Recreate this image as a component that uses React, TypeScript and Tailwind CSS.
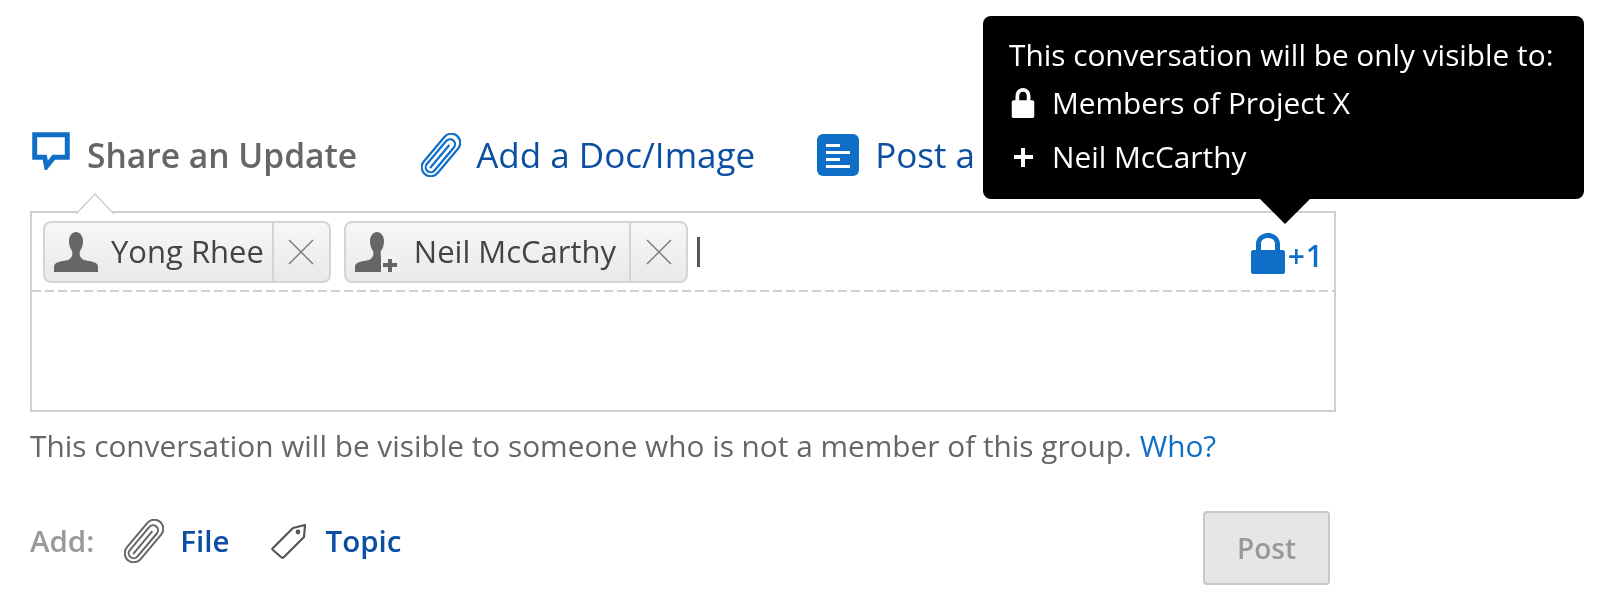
const font = "font-['Open_Sans',sans-serif]";

const PersonIcon = ({ plus }: { plus?: boolean }) => (
  <svg width="46" height="40" viewBox="0 0 46 40" fill="#666">
    <path d="M23 0c-4 0-7 4-7 9 0 4 1 7 3 10 1 4 0 7-4 9-3 1-13 1-14 6v6h44v-6c-1-5-11-5-14-6-4-2-5-5-4-9 2-3 3-6 3-10 0-5-3-9-7-9z" />
    {plus && (
      <>
        <rect x="27" y="23" width="19" height="17" fill="#f1f1f1" />
        <path d="M34 27h4v4h5v4h-5v5h-4v-5h-5v-4h5z" />
      </>
    )}
  </svg>
);

// nested loops of a paper clip, turned on the diagonal
const ClipIcon = ({ color, w, h, sw }: { color: string; w: number; h: number; sw: number }) => (
  <svg width={w} height={h} viewBox="0 0 40 44" fill="none" stroke={color} strokeWidth={sw}>
    <g transform="rotate(40 20 22)">
      <rect x="11" y="-3" width="18" height="50" rx="9" />
      <rect x="15" y="3" width="10" height="40" rx="5" />
      <path d="M20 9v30" />
    </g>
  </svg>
);

const Chip = ({ name, plus, gap, pr }: { name: string; plus?: boolean; gap: string; pr: string }) => (
  <div className="flex h-[62px] items-stretch rounded-lg border-2 border-[#d4d4d4] bg-gradient-to-b from-[#f7f7f7] to-[#e9e9e9]">
    <div className={`flex items-center pl-2 ${pr} ${gap}`}>
      <PersonIcon plus={plus} />
      <span className="text-[31px] text-[#444]">{name}</span>
    </div>
    <div className="flex w-[57px] items-center justify-center border-l-2 border-[#d4d4d4]">
      <svg width="28" height="28" viewBox="0 0 28 28" stroke="#777" strokeWidth="1.4">
        <path d="M2 2l24 24M26 2L2 26" />
      </svg>
    </div>
  </div>
);

export default function App() {
  return (
    <div className={`relative h-[604px] w-[1600px] overflow-hidden bg-white blur-[0.5px] ${font}`}>
      <div className="flex flex-col pl-[30px] pt-[130px]">
        {/* tabs */}
        <div className="flex h-[50px] items-center">
          <svg width="42" height="38" viewBox="0 0 42 42" fill="none" className="mr-[15px] -mt-[8px]">
            <path d="M3 3h36v25H24l-8 10-2-10H3z" stroke="#0f6fc6" strokeWidth="5.5" />
          </svg>
          <span className="text-[33.6px] font-semibold text-[#666]">Share an Update</span>
          <span className="ml-[64px] mr-[15px]">
            <ClipIcon color="#0f6fc6" w={40} h={44} sw={2.2} />
          </span>
          <span className="text-[35px] text-[#0b4ea2]">Add a Doc/Image</span>
          <svg width="42" height="42" viewBox="0 0 42 42" className="ml-[62px] mr-[16px]">
            <rect width="42" height="42" rx="6" fill="#0f6fc6" />
            <path d="M9 10h14v3H9zM9 17h24v3H9zM9 24h14v3H9zM9 31h24v3H9z" fill="#fff" />
          </svg>
          <span className="text-[35px] text-[#0b4ea2]">Post a</span>
        </div>

        {/* composer */}
        <div className="relative mt-[31px] flex h-[201px] w-[1306px] flex-col border-2 border-[#cfcfcf]">
          <svg width="38" height="21" viewBox="0 0 38 21" className="absolute left-[44px] top-[-20px]">
            <path d="M0 21L19 1l19 20" fill="#fff" stroke="#cfcfcf" strokeWidth="1.5" />
          </svg>
          <div className="flex h-[77px] items-center pl-[11px] pr-[10px]">
            <div className="flex items-center gap-[13px]">
              <Chip name="Yong Rhee" gap="gap-3" pr="pr-2" />
              <Chip name="Neil McCarthy" plus gap="gap-[14px]" pr="pr-[13px]" />
            </div>
            <div className="ml-[9px] h-[30px] w-[3px] bg-[#555]" />
            <div className="ml-auto flex items-end gap-[3px] pt-[3px] text-[#0f6fc6]">
              <svg width="34" height="42" viewBox="0 0 34 42" fill="#0f6fc6">
                <path d="M2 18h3v-6C5 6 10 1 17 1s12 5 12 11v6h3c1 0 2 1 2 2v20c0 1-1 2-2 2H2c-1 0-2-1-2-2V20c0-1 1-2 2-2zm8 0h14v-6c0-4-3-6-7-6s-7 2-7 6z" />
              </svg>
              <span className="text-[30px] font-semibold leading-[36px] tracking-[1px]">+1</span>
            </div>
          </div>
          <div className="h-[2px] w-full bg-[repeating-linear-gradient(90deg,#d0d0d0_0,#d0d0d0_9px,transparent_9px,transparent_13px)]" />
        </div>

        <p className="mt-[15px] text-[29.8px] leading-[38px] text-[#666]">
          This conversation will be visible to someone who is not a member of this group.{" "}
          <span className="text-[#0f6fc6]">Who?</span>
        </p>

        {/* add row */}
        <div className="mt-[46px] flex h-[74px] w-[1300px] items-center">
          <div className="flex items-center pb-[14px] text-[29.5px] font-semibold">
            <span className="text-[#999]">Add:</span>
            <span className="ml-[30px] mr-[16px]">
              <ClipIcon color="#666" w={40} h={44} sw={2} />
            </span>
            <span className="text-[#0b4ea2]">File</span>
            <svg width="36" height="36" viewBox="0 0 36 36" fill="none" stroke="#555" strokeWidth="2.2" strokeLinejoin="round" className="ml-[41px] mr-[19px]">
              <path d="M2 25L22 5l12-3-1 12-20 20c-1 1-2 1-3 0l-8-7c-1-1-1-1 0-2z" />
              <circle cx="27" cy="9" r="1.3" />
            </svg>
            <span className="text-[#0b4ea2]">Topic</span>
          </div>
          <button className="ml-auto h-[74px] w-[127px] rounded-[4px] border-2 border-[#c8c8c8] bg-[#e6e6e6] text-[28px] font-semibold text-[#999]">
            Post
          </button>
        </div>
      </div>

      {/* tooltip */}
      <div className="absolute left-[983px] top-[16px] h-[183px] w-[601px] rounded-lg bg-black pl-[26px] pt-[16px] text-[29.8px] text-white">
        <div className="leading-[46px]">This conversation will be only visible to:</div>
        <div className="flex items-center gap-[17px] leading-[50px]">
          <svg width="24" height="30" viewBox="0 0 24 32" fill="#fff" className="ml-[2px]">
            <path d="M2 13h2V9c0-5 3-9 8-9s8 4 8 9v4h2c1 0 2 1 2 2v15c0 1-1 2-2 2H2c-1 0-2-1-2-2V15c0-1 1-2 2-2zm6 0h8V9c0-3-1-5-4-5S8 6 8 9z" />
          </svg>
          <span>Members of Project X</span>
        </div>
        <div className="mt-[2px] flex items-center gap-[17px] leading-[54px]">
          <svg width="24" height="24" viewBox="0 0 24 24" fill="#fff" className="ml-[2px]">
            <path d="M10 3h4v7h8v4h-8v8h-4v-8H3v-4h7z" />
          </svg>
          <span>Neil McCarthy</span>
        </div>
        <div className="absolute left-[277px] top-[183px] h-0 w-0 border-x-[25px] border-t-[25px] border-x-transparent border-t-black" />
      </div>
    </div>
  );
}
